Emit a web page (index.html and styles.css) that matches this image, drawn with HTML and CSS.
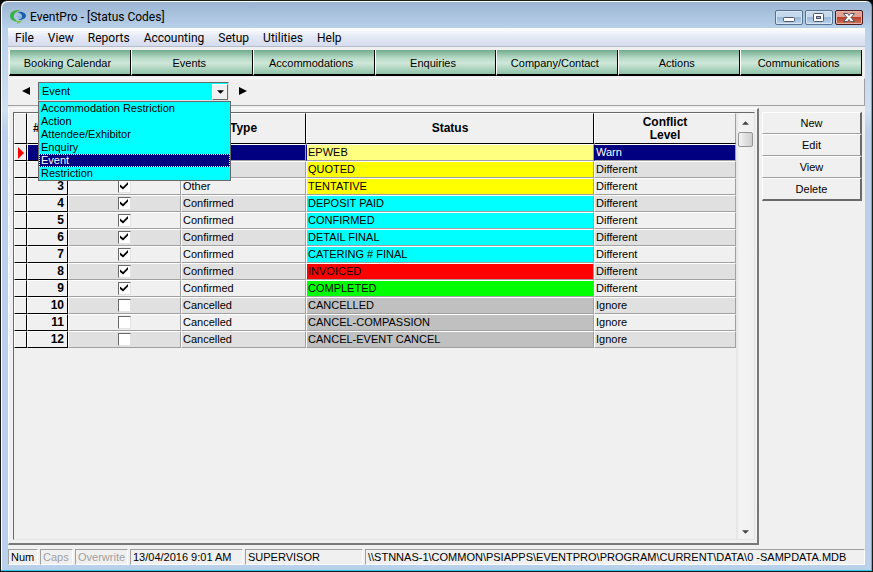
FILE: index.html
```html
<!DOCTYPE html>
<html lang="en">
<head>
<meta charset="utf-8">
<title>EventPro - [Status Codes]</title>
<link rel="stylesheet" href="styles.css">
</head>
<body>
<div class="window">
  <header class="titlebar">
    <svg class="logo" viewBox="0 0 16 14" aria-hidden="true">
      <path d="M10 0C4 0 0 2 0 6c0 3 3 5 8 5 2 0 4-1 5-2-1 2-3 4-6 5l0-2C2 11 0 9 0 6z" fill="#7cc242"/>
      <path d="M10 0C4 0 0 2 0 6c0 3 3 5 7 5C4 9 3 7 4 5c1-3 3-4 6-5z" fill="#35b04a"/>
      <path d="M7 2c5-1 9 1 9 4 0 2-3 4-8 4 3-1 4-2 4-4S10 3 7 2z" fill="#1c5fa8"/>
      <path d="M7 6l5-1-1 3-3 2c1-1 1-2-1-4z" fill="#7fb8e4"/>
    </svg>
    <h1 class="title">EventPro - [Status Codes]</h1>
    <div class="caption-buttons">
      <button class="caption" aria-label="Minimize"><svg viewBox="0 0 28 15"><rect x="8.500" y="7.500" width="11" height="4" rx="1" fill="#fff" stroke="#535666"/></svg></button>
      <button class="caption" aria-label="Restore"><svg viewBox="0 0 28 15"><rect x="8.500" y="3.500" width="10" height="8" rx="1" fill="#fff" stroke="#535666"/><rect x="11.500" y="6.500" width="4" height="2" fill="#8db0d6" stroke="#535666"/></svg></button>
      <button class="caption close" aria-label="Close"><svg viewBox="0 0 28 15"><path d="M8.500 3.500h4l1.500 2 1.500-2h4l-3.500 4 3.500 4h-4l-1.500-2-1.500 2h-4l3.500-4z" fill="#fff" stroke="#535666"/></svg></button>
    </div>
  </header>
  <div class="client">
    <nav class="menubar" aria-label="Menu">
      <a href="#">File</a><a href="#">View</a><a href="#">Reports</a><a href="#">Accounting</a><a href="#">Setup</a><a href="#">Utilities</a><a href="#">Help</a>
    </nav>
    <div class="toolbar">
      <button>Booking Calendar</button><button>Events</button><button>Accommodations</button><button>Enquiries</button><button>Company/Contact</button><button>Actions</button><button>Communications</button>
    </div>
    <div class="picker">
      <button class="step" aria-label="Previous"><svg viewBox="0 0 8 8"><path d="M8 0v8L0 4z"/></svg></button>
      <div class="combo">
        <select aria-label="Status code type">
          <option>Accommodation Restriction</option><option>Action</option><option>Attendee/Exhibitor</option><option>Enquiry</option><option selected>Event</option><option>Restriction</option>
        </select>
        <span class="drop" aria-hidden="true"><svg viewBox="0 0 8 4"><path d="M0 0h8L4 4z"/></svg></span>
        <ul class="list" role="listbox" aria-label="Types">
          <li role="option">Accommodation Restriction</li>
          <li role="option">Action</li>
          <li role="option">Attendee/Exhibitor</li>
          <li role="option">Enquiry</li>
          <li role="option" class="chosen" aria-selected="true">Event</li>
          <li role="option">Restriction</li>
        </ul>
      </div>
      <button class="step" aria-label="Next"><svg viewBox="0 0 8 8"><path d="M0 0v8l8-4z"/></svg></button>
    </div>
    <main class="work">
      <section class="panel">
        <div class="grid">
          <table>
            <colgroup><col class="c-mark"><col class="c-num"><col class="c-check"><col class="c-type"><col class="c-status"><col class="c-level"></colgroup>
            <thead><tr><th></th><th class="hash">#</th><th></th><th>Type</th><th>Status</th><th>Conflict<br>Level</th></tr></thead>
            <tbody>
              <tr class="current"><td class="fixed"><svg class="marker" viewBox="0 0 6 12"><path d="M0 0l6 6-6 6z"/></svg></td><td class="fixed num"></td><td class="check"><input type="checkbox" aria-label="Active 1" checked></td><td></td><td class="pale">EPWEB</td><td>Warn</td></tr>
              <tr><td class="fixed"></td><td class="fixed num"></td><td class="check"><input type="checkbox" aria-label="Active 2" checked></td><td></td><td class="yellow">QUOTED</td><td>Different</td></tr>
              <tr><td class="fixed"></td><td class="fixed num">3</td><td class="check"><input type="checkbox" aria-label="Active 3" checked></td><td>Other</td><td class="yellow">TENTATIVE</td><td>Different</td></tr>
              <tr><td class="fixed"></td><td class="fixed num">4</td><td class="check"><input type="checkbox" aria-label="Active 4" checked></td><td>Confirmed</td><td class="cyan">DEPOSIT PAID</td><td>Different</td></tr>
              <tr><td class="fixed"></td><td class="fixed num">5</td><td class="check"><input type="checkbox" aria-label="Active 5" checked></td><td>Confirmed</td><td class="cyan">CONFIRMED</td><td>Different</td></tr>
              <tr><td class="fixed"></td><td class="fixed num">6</td><td class="check"><input type="checkbox" aria-label="Active 6" checked></td><td>Confirmed</td><td class="cyan">DETAIL FINAL</td><td>Different</td></tr>
              <tr><td class="fixed"></td><td class="fixed num">7</td><td class="check"><input type="checkbox" aria-label="Active 7" checked></td><td>Confirmed</td><td class="cyan">CATERING # FINAL</td><td>Different</td></tr>
              <tr><td class="fixed"></td><td class="fixed num">8</td><td class="check"><input type="checkbox" aria-label="Active 8" checked></td><td>Confirmed</td><td class="red">INVOICED</td><td>Different</td></tr>
              <tr><td class="fixed"></td><td class="fixed num">9</td><td class="check"><input type="checkbox" aria-label="Active 9" checked></td><td>Confirmed</td><td class="green">COMPLETED</td><td>Different</td></tr>
              <tr><td class="fixed"></td><td class="fixed num">10</td><td class="check"><input type="checkbox" aria-label="Active 10"></td><td>Cancelled</td><td class="grey">CANCELLED</td><td>Ignore</td></tr>
              <tr><td class="fixed"></td><td class="fixed num">11</td><td class="check"><input type="checkbox" aria-label="Active 11"></td><td>Cancelled</td><td class="grey">CANCEL-COMPASSION</td><td>Ignore</td></tr>
              <tr><td class="fixed"></td><td class="fixed num">12</td><td class="check"><input type="checkbox" aria-label="Active 12"></td><td>Cancelled</td><td class="grey">CANCEL-EVENT CANCEL</td><td>Ignore</td></tr>
            </tbody>
          </table>
          <div class="scroll" aria-hidden="true">
            <svg class="arrow" viewBox="0 0 8 4"><path d="M0 4h8L4 0z"/></svg>
            <div class="thumb"></div>
            <svg class="arrow end" viewBox="0 0 8 4"><path d="M0 0h8L4 4z"/></svg>
          </div>
        </div>
      </section>
      <aside class="actions"><button>New</button><button>Edit</button><button>View</button><button>Delete</button></aside>
    </main>
    <footer class="status">
      <span class="s-num">Num</span><span class="s-caps off">Caps</span><span class="s-over off">Overwrite</span><span class="s-date">13/04/2016 9:01 AM</span><span class="s-user">SUPERVISOR</span><span class="s-path">\\STNNAS-1\COMMON\PSIAPPS\EVENTPRO\PROGRAM\CURRENT\DATA\0 -SAMPDATA.MDB</span>
    </footer>
  </div>
</div>
</body>
</html>
```
FILE: styles.css
```css
* { box-sizing: border-box; }
html, body { height: 100%; }
body { margin: 0; background: #000; font: 11px/13px "Liberation Sans", Arial, sans-serif; color: #000; }
button, select, input { font: inherit; color: inherit; margin: 0; padding: 0; border: 0; border-radius: 0; }
svg { display: block; }

.window { height: 100vh; display: flex; flex-direction: column; padding: 0 7px 6px 6px; border: 1px solid #1a1a1a; border-radius: 7px 7px 0 0; background: linear-gradient(#9ab4d2, #b9d1ea 28px, #cfe0f2 110px, #b9d1ea 130px); box-shadow: inset -1px -1px #27c8e8, inset 1px 1px #fff; }
.titlebar { height: 27px; flex: none; display: flex; align-items: center; padding: 5px 2px 0 3px; }
.logo { width: 16px; height: 14px; }
.title { flex: 1; margin: 0 0 0 4px; font: 12px/16px Roboto, "Noto Sans", sans-serif; }
.caption-buttons { display: flex; gap: 2px; }
.caption { width: 28px; height: 15px; border-radius: 2px; border: 1px solid #56708f; background: linear-gradient(#c5d8ec 45%, #9ab8d8 50%, #b9d3ec); box-shadow: inset 0 0 0 1px #d8e6f4; }
.caption svg { width: 28px; height: 15px; margin: -1px; }
.caption.close { border-color: #4a1a1c; background: linear-gradient(#e0a194 45%, #b8402c 50%, #d0765c); box-shadow: inset 0 0 0 1px #e5b0a6; }

.client { flex: 1; min-height: 0; display: flex; flex-direction: column; background: #f0f0f0; margin-left: 1px; }
.menubar { flex: none; height: 19px; display: flex; gap: 14px; padding: 0 7px; background: linear-gradient(#fff, #e4e8f5 50%, #d5dcee); border-bottom: 1px solid #b6bccc; font: 12px/20px Roboto, "Noto Sans", sans-serif; }
.menubar a { color: inherit; text-decoration: none; }
.toolbar { flex: none; display: flex; margin: 3px 3px 2px 1px; }
.toolbar button { flex: 1 1 0; height: 26px; padding: 2px 5px 0 0; border-right: 1px solid #000; border-bottom: 2px solid #000; border-left: 1px solid #fff; background: linear-gradient(#72ab8e, #b9dcc9 35%, #cfe7d9 55%, #8fc2a7); }
.picker { flex: none; height: 28px; display: flex; align-items: center; padding: 0 0 2px 14px; border-top: 1px solid #fff; border-bottom: 1px solid #a0a0a0; border-right: 1px solid #a0a0a0; }
.step { width: 8px; height: 8px; background: none; }
.combo { position: relative; width: 191px; margin: 0 10px 0 8px; }
.combo select { display: block; width: 100%; height: 19px; appearance: none; background: #0ff; border: 1px solid #696969; border-right-color: #e3e3e3; border-bottom-color: #e3e3e3; padding-left: 3px; }
.drop { position: absolute; top: 2px; right: 1px; width: 16px; height: 16px; display: grid; place-items: center; background: #f0f0f0; border: 1px solid #fff; border-right-color: #696969; border-bottom-color: #696969; pointer-events: none; }
.drop svg { width: 7px; height: 4px; }
.list { position: absolute; z-index: 2; top: 100%; left: 0; width: 193px; margin: 0; padding: 0; list-style: none; background: #0ff; border: 1px solid #696969; }
.list li { padding: 0 2px; }
.list .chosen { background: #000080; color: #fff; outline: 1px dotted #ffff80; outline-offset: -1px; }

.work { flex: 1; min-height: 0; display: flex; align-items: stretch; gap: 3px; padding: 2px 3px 4px 0; }
.panel { flex: 1; min-width: 0; padding: 3px 2px 3px 4px; border: 1px solid #fff; border-right: 2px solid #787878; border-bottom: 2px solid #787878; }
.grid { height: 100%; display: flex; align-items: flex-start; border: 1px solid #696969; border-right-color: #e3e3e3; border-bottom-color: #e3e3e3; }
table { flex: 1; table-layout: fixed; width: 0; border-collapse: separate; border-spacing: 0; }
.c-mark { width: 13px; } .c-num { width: 41px; } .c-check { width: 113px; } .c-type { width: 125px; } .c-level { width: 142px; }
th { height: 31px; padding: 0; background: #f0f0f0; border: 1px solid #fff; border-right-color: #000; border-bottom-color: #000; font: bold 12px/13px "Liberation Sans", Arial, sans-serif; }
th:last-child { border-right-color: #a0a0a0; }
th.hash { text-align: left; padding-left: 5px; }
td { height: 17px; padding: 0 1px; border: 1px solid #fff; border-right-color: #a0a0a0; border-bottom-color: #a0a0a0; line-height: 15px; white-space: nowrap; overflow: hidden; }
tr:nth-child(even) td { background: #e0e0e0; }
tr.current td { background: #000080; color: #fff; border-left-color: #000080; }
tbody tr td.fixed { background: #f0f0f0; border-right-color: #000; border-bottom-color: #000; border-left-color: #fff; }
tbody tr.current td.num { background: #000080; }
.num { font: bold 12px/15px "Liberation Sans", Arial, sans-serif; text-align: right; padding-right: 3px; }
.marker { width: 6px; height: 12px; margin-left: 2px; fill: #f00; }
tbody tr td.pale { background: #ffff80; color: #000; }
tbody tr td.yellow { background: #ff0; }
tbody tr td.cyan { background: #0ff; }
tbody tr td.red { background: #f00; }
tbody tr td.green { background: #0f0; }
tbody tr td.grey { background: #c0c0c0; }
.check input { display: block; appearance: none; width: 13px; height: 13px; margin: 0 auto; background: #fff; border: 1px solid #696969; border-right-color: #e3e3e3; border-bottom-color: #e3e3e3; }
.check input:checked::before { content: ""; display: block; width: 8px; height: 8px; margin: 1px; background: #000; clip-path: polygon(0 30%, 38% 62%, 100% 0, 100% 32%, 38% 95%, 0 62%); }
.scroll { align-self: stretch; width: 18px; display: flex; flex-direction: column; align-items: center; padding: 8px 0 5px; background: linear-gradient(90deg, #e3e3e3, #f4f4f4 20%, #f0f0f0); }
.arrow { width: 7px; height: 4px; fill: #444; }
.end { margin-top: auto; }
.thumb { width: 15px; height: 15px; margin-top: 7px; border: 1px solid #959595; border-radius: 2px; background: linear-gradient(90deg, #f5f5f5, #e0e0e0 50%, #cfcfcf); }
.actions { flex: none; width: 100px; padding-top: 4px; }
.actions button { display: block; width: 100%; height: 22px; background: #f0f0f0; border: 1px solid #fff; border-right: 2px solid #696969; border-bottom-color: #a0a0a0; }
.actions button:last-child { height: 23px; border-bottom: 2px solid #696969; }

.status { flex: none; display: flex; gap: 2px; height: 16px; }
.status span { border: 1px solid #a0a0a0; border-right-color: #fff; border-bottom-color: #fff; padding: 1px 2px 0; white-space: nowrap; overflow: hidden; }
.status .off { color: #a0a0a0; }
.s-num { width: 30px; } .s-caps { width: 33px; } .s-over { width: 53px; } .s-date { width: 113px; } .s-user { width: 118px; } .s-path { flex: 1; }
```
